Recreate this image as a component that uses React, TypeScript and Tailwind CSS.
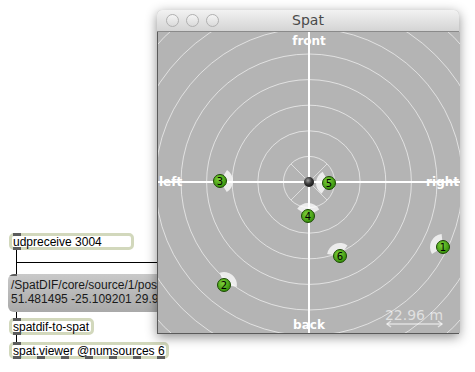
import React from 'react';

type Source = { id: number; x: number; y: number };

// source positions inside the spat canvas (302x301)
const sources: Source[] = [
  { id: 1, x: 285, y: 215 },
  { id: 2, x: 66, y: 253 },
  { id: 3, x: 62, y: 149 },
  { id: 4, x: 150, y: 184 },
  { id: 5, x: 171, y: 151 },
  { id: 6, x: 182, y: 224 },
];

const CX = 151;
const CY = 150;

function wedge(s: Source) {
  const a = Math.atan2(CY - s.y, CX - s.x);
  const spread = (58 * Math.PI) / 180;
  const r1 = 5;
  const r2 = 13;
  const p = (r: number, ang: number) => `${s.x + r * Math.cos(ang)} ${s.y + r * Math.sin(ang)}`;
  return `M ${p(r1, a - spread)} L ${p(r2, a - spread)} A ${r2} ${r2} 0 0 1 ${p(r2, a + spread)} L ${p(r1, a + spread)} A ${r1} ${r1} 0 0 0 ${p(r1, a - spread)} Z`;
}

function SpatCanvas() {
  const rings = [1, 2, 3, 4, 5, 6, 7, 8];
  return (
    <svg width="302" height="301" viewBox="0 0 302 301" className="block">
      <defs>
        <radialGradient id="ball" cx="0.4" cy="0.35" r="0.7">
          <stop offset="0" stopColor="#a0a0a0" />
          <stop offset="0.5" stopColor="#3a3a3a" />
          <stop offset="1" stopColor="#111" />
        </radialGradient>
        <radialGradient id="src" cx="0.4" cy="0.35" r="0.7">
          <stop offset="0" stopColor="#7fd23a" />
          <stop offset="1" stopColor="#2f8a06" />
        </radialGradient>
      </defs>
      <rect width="302" height="301" fill="#b4b4b4" />
      {rings.map((n) => (
        <circle key={n} cx={CX} cy={CY} r={n * 25.6} fill="none" stroke="#ffffff" strokeOpacity="0.6" strokeWidth="1" />
      ))}
      <line x1={CX - 18} y1={CY - 18} x2={CX + 18} y2={CY + 18} stroke="#fff" strokeOpacity="0.55" />
      <line x1={CX + 18} y1={CY - 18} x2={CX - 18} y2={CY + 18} stroke="#fff" strokeOpacity="0.55" />
      <line x1={CX} y1="0" x2={CX} y2="301" stroke="#fff" strokeWidth="2" />
      <line x1="0" y1={CY} x2="302" y2={CY} stroke="#fff" strokeWidth="2" />

      <g fontFamily="'DejaVu Sans', sans-serif" fontSize="12" fontWeight="bold" fill="#fff">
        <text x={CX} y="13" textAnchor="middle">front</text>
        <text x={CX} y="297" textAnchor="middle">back</text>
        <text x="1" y={CY + 4}>left</text>
        <text x="301" y={CY + 4} textAnchor="end">right</text>
      </g>

      <text x="256" y="288" textAnchor="middle" fontFamily="'DejaVu Sans', sans-serif" fontSize="14" fill="#fff" fillOpacity="0.6">
        22.96 m
      </text>
      <g stroke="#fff" strokeOpacity="0.6" strokeWidth="1.5" fill="none">
        <line x1="229" y1="292" x2="284" y2="292" />
        <polyline points="233,289 229,292 233,295" />
        <polyline points="280,289 284,292 280,295" />
      </g>

      {sources.map((s) => (
        <path key={`w${s.id}`} d={wedge(s)} fill="#fff" fillOpacity="0.75" />
      ))}
      <circle cx={CX} cy={CY} r="5" fill="url(#ball)" />
      {sources.map((s) => (
        <g key={s.id}>
          <circle cx={s.x} cy={s.y} r="6.5" fill="url(#src)" stroke="#1d4a05" strokeWidth="1" />
          <text x={s.x} y={s.y + 3.5} textAnchor="middle" fontFamily="'DejaVu Sans', sans-serif" fontSize="10" fill="#000">
            {s.id}
          </text>
        </g>
      ))}
    </svg>
  );
}

function TrafficLight() {
  return <span className="w-[13px] h-[13px] rounded-full border border-[#b0b0b0] bg-gradient-to-b from-[#f4f4f4] to-[#dadada]" />;
}

function ObjBox({ label, outlets = 1, width }: { label: string; outlets?: number; width: string }) {
  return (
    <div className={`relative h-[17px] bg-white border-[3px] border-[#d2d8bc] rounded-[5px] flex items-center pl-[1px] ml-[1px] ${width}`}>
      <span className="absolute left-[1px] -top-[3px] w-[8px] h-[3px] bg-[#5c5c5c]" />
      <span className="text-[12px] leading-none text-black whitespace-nowrap">{label}</span>
      <div className="absolute left-[1px] right-[1px] -bottom-[3px] h-[3px] flex justify-between">
        {Array.from({ length: outlets }).map((_, i) => (
          <span key={i} className="w-[8px] h-[3px] bg-[#5c5c5c]" />
        ))}
      </div>
    </div>
  );
}

function Cord({ h }: { h: string }) {
  return <div className={`ml-[8px] w-[1px] bg-black ${h}`} />;
}

export default function App() {
  return (
    <div className="relative w-[475px] h-[372px] bg-white overflow-hidden font-['Liberation_Sans',Arial,sans-serif]">
      {/* patch */}
      <div className="absolute left-[8px] top-[233px] flex flex-col">
        <div className="relative">
          <ObjBox label="udpreceive 3004" width="w-[125px]" />
          <div className="absolute left-[9px] top-[29px] w-[150px] h-[1px] bg-black" />
        </div>
        <Cord h="h-[24px]" />
        <div className="relative w-[160px] h-[38px] rounded-[6px] bg-gradient-to-b from-[#c9c9c9] to-[#a9a9a9] px-[3px] pt-[4px] text-[12px] leading-[14px] text-[#1a1a1a] whitespace-nowrap overflow-hidden">
          <span className="absolute left-[1px] top-0 w-[8px] h-[2px] bg-[#5c5c5c]" />
          <div>/SpatDIF/core/source/1/position</div>
          <div>51.481495 -25.109201 29.913</div>
        </div>
        <Cord h="h-[6px]" />
        <ObjBox label="spatdif-to-spat" width="w-[85px]" />
        <Cord h="h-[7px]" />
        <ObjBox label="spat.viewer @numsources 6" outlets={7} width="w-[160px]" />
      </div>

      {/* Spat window */}
      <div className="absolute left-[157px] top-[10px] w-[302px] rounded-t-[5px] shadow-[0_3px_12px_rgba(0,0,0,0.45)] bg-[#b4b4b4]">
        <div className="relative h-[22px] rounded-t-[5px] bg-gradient-to-b from-[#f2f2f2] to-[#d4d4d4] border-b border-[#8a8a8a] flex items-center">
          <div className="flex items-center gap-[7px] pl-[9px]">
            <TrafficLight />
            <TrafficLight />
            <TrafficLight />
          </div>
          <span className="absolute inset-0 flex items-center justify-center text-[14px] text-[#4a4a4a] font-['DejaVu_Sans',sans-serif]">
            Spat
          </span>
        </div>
        <div className="border-x border-b border-[#5a5a5a]">
          <SpatCanvas />
        </div>
      </div>
    </div>
  );
}
